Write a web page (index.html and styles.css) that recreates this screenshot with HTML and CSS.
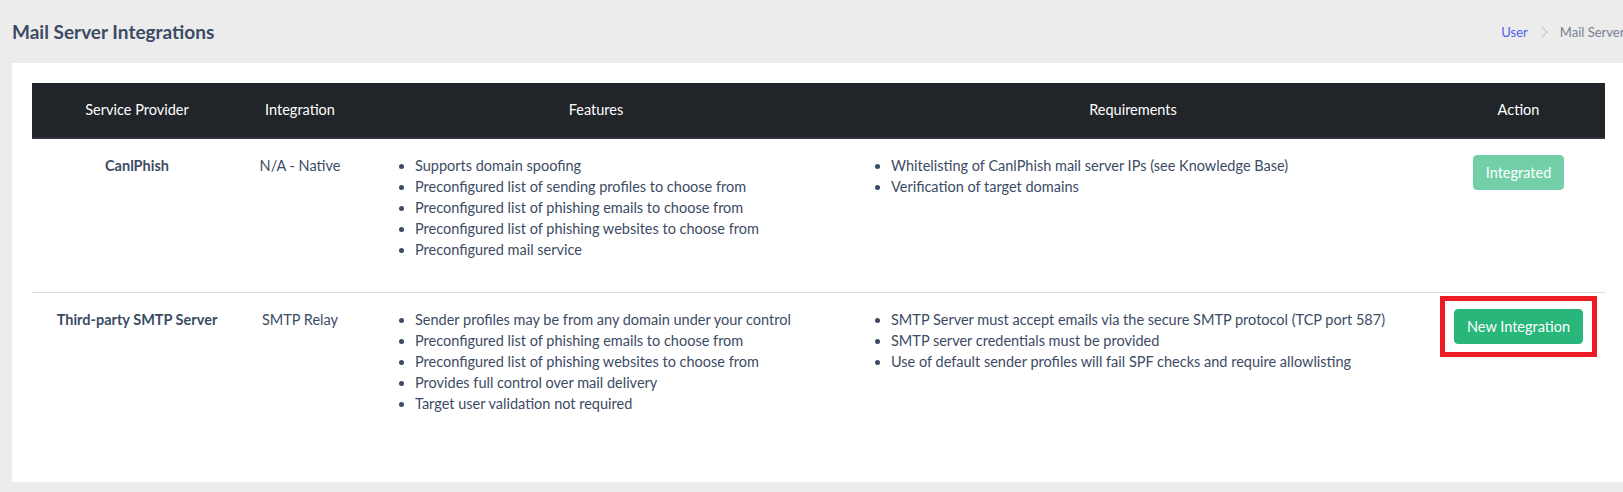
FILE: index.html
```html
<!DOCTYPE html>
<html lang="en">
<head>
    <meta charset="UTF-8">
    <title>Mail Server Integrations</title>
    <link rel="stylesheet" href="styles.css">
</head>
<body>
    <div class="page">
        <div class="page-head">
            <h1>Mail Server Integrations</h1>
            <ol class="crumbs">
                <li><a href="#">User</a></li>
                <li class="active">Mail Servers</li>
            </ol>
        </div>

        <div class="card">
            <table class="integrations">
                <colgroup>
                    <col style="width: 210px">
                    <col style="width: 116px">
                    <col style="width: 476px">
                    <col style="width: 598px">
                    <col style="width: 173px">
                </colgroup>
                <thead>
                    <tr>
                        <th>Service Provider</th>
                        <th>Integration</th>
                        <th>Features</th>
                        <th>Requirements</th>
                        <th>Action</th>
                    </tr>
                </thead>
                <tbody>
                    <tr>
                        <td class="provider">CanlPhish</td>
                        <td class="center">N/A - Native</td>
                        <td>
                            <ul>
                                <li>Supports domain spoofing</li>
                                <li>Preconfigured list of sending profiles to choose from</li>
                                <li>Preconfigured list of phishing emails to choose from</li>
                                <li>Preconfigured list of phishing websites to choose from</li>
                                <li>Preconfigured mail service</li>
                            </ul>
                        </td>
                        <td>
                            <ul>
                                <li>Whitelisting of CanlPhish mail server IPs (see Knowledge Base)</li>
                                <li>Verification of target domains</li>
                            </ul>
                        </td>
                        <td class="center">
                            <button class="btn" disabled>Integrated</button>
                        </td>
                    </tr>
                    <tr>
                        <td class="provider">Third-party SMTP Server</td>
                        <td class="center">SMTP Relay</td>
                        <td>
                            <ul>
                                <li>Sender profiles may be from any domain under your control</li>
                                <li>Preconfigured list of phishing emails to choose from</li>
                                <li>Preconfigured list of phishing websites to choose from</li>
                                <li>Provides full control over mail delivery</li>
                                <li>Target user validation not required</li>
                            </ul>
                        </td>
                        <td>
                            <ul>
                                <li>SMTP Server must accept emails via the secure SMTP protocol (TCP port 587)</li>
                                <li>SMTP server credentials must be provided</li>
                                <li>Use of default sender profiles will fail SPF checks and require allowlisting</li>
                            </ul>
                        </td>
                        <td class="center">
                            <span class="highlight"><button class="btn">New Integration</button></span>
                        </td>
                    </tr>
                </tbody>
            </table>
        </div>
    </div>
</body>
</html>
```

FILE: styles.css
```css
* {
    box-sizing: border-box;
}

html, body {
    margin: 0;
    padding: 0;
    overflow: hidden;
}

body {
    background-color: #ececec;
    font-family: Lato, "Noto Sans", sans-serif;
    font-size: 14.5px;
    color: #3c4b64;
}

.page {
    width: 1642px;
    padding: 0 12px 10px 12px;
}

.page-head {
    display: flex;
    align-items: center;
    justify-content: space-between;
    height: 63px;
}

.page-head h1 {
    margin: 0;
    font-size: 19px;
    font-weight: 700;
    color: #3c4b64;
}

.crumbs {
    display: flex;
    align-items: center;
    list-style: none;
    margin: 0;
    padding: 0;
    font-size: 13px;
}

.crumbs li {
    display: flex;
    align-items: center;
}

.crumbs a {
    color: #4f5ff5;
    text-decoration: none;
}

.crumbs li + li::before {
    content: "";
    width: 7px;
    height: 7px;
    border-top: 1px solid #c4c9d0;
    border-right: 1px solid #c4c9d0;
    transform: rotate(45deg);
    margin: 0 14px 0 10px;
}

.crumbs .active {
    color: #768192;
}

.card {
    background-color: #fff;
    padding: 20px;
}

table.integrations {
    width: 1573px;
    border-collapse: collapse;
    margin-bottom: 16px;
    table-layout: fixed;
}

table.integrations th {
    background-color: #212428;
    color: #fff;
    font-weight: 400;
    line-height: 22px;
    padding: 16px 17px;
    text-align: center;
    border-bottom: 2px solid #32363c;
}

table.integrations td {
    vertical-align: top;
    line-height: 21px;
    padding: 16px 17px;
}

table.integrations tbody tr + tr td {
    border-top: 1px solid #d8dbe0;
}

table.integrations td.provider {
    font-weight: 700;
    text-align: center;
}

table.integrations td.center {
    text-align: center;
}

table.integrations ul {
    margin: 0 0 16px 0;
    padding-left: 40px;
}

.btn {
    font-family: inherit;
    font-size: 14.5px;
    line-height: 21px;
    padding: 6px 12px;
    border: 1px solid #28b67a;
    border-radius: 4px;
    background-color: #28b67a;
    color: #fff;
    cursor: pointer;
}

.btn:disabled {
    opacity: .65;
    cursor: default;
}

.highlight {
    display: inline-block;
    border: 5px solid #ed1c24;
    padding: 8px 9px;
    margin: -13px -14px;
}
```
